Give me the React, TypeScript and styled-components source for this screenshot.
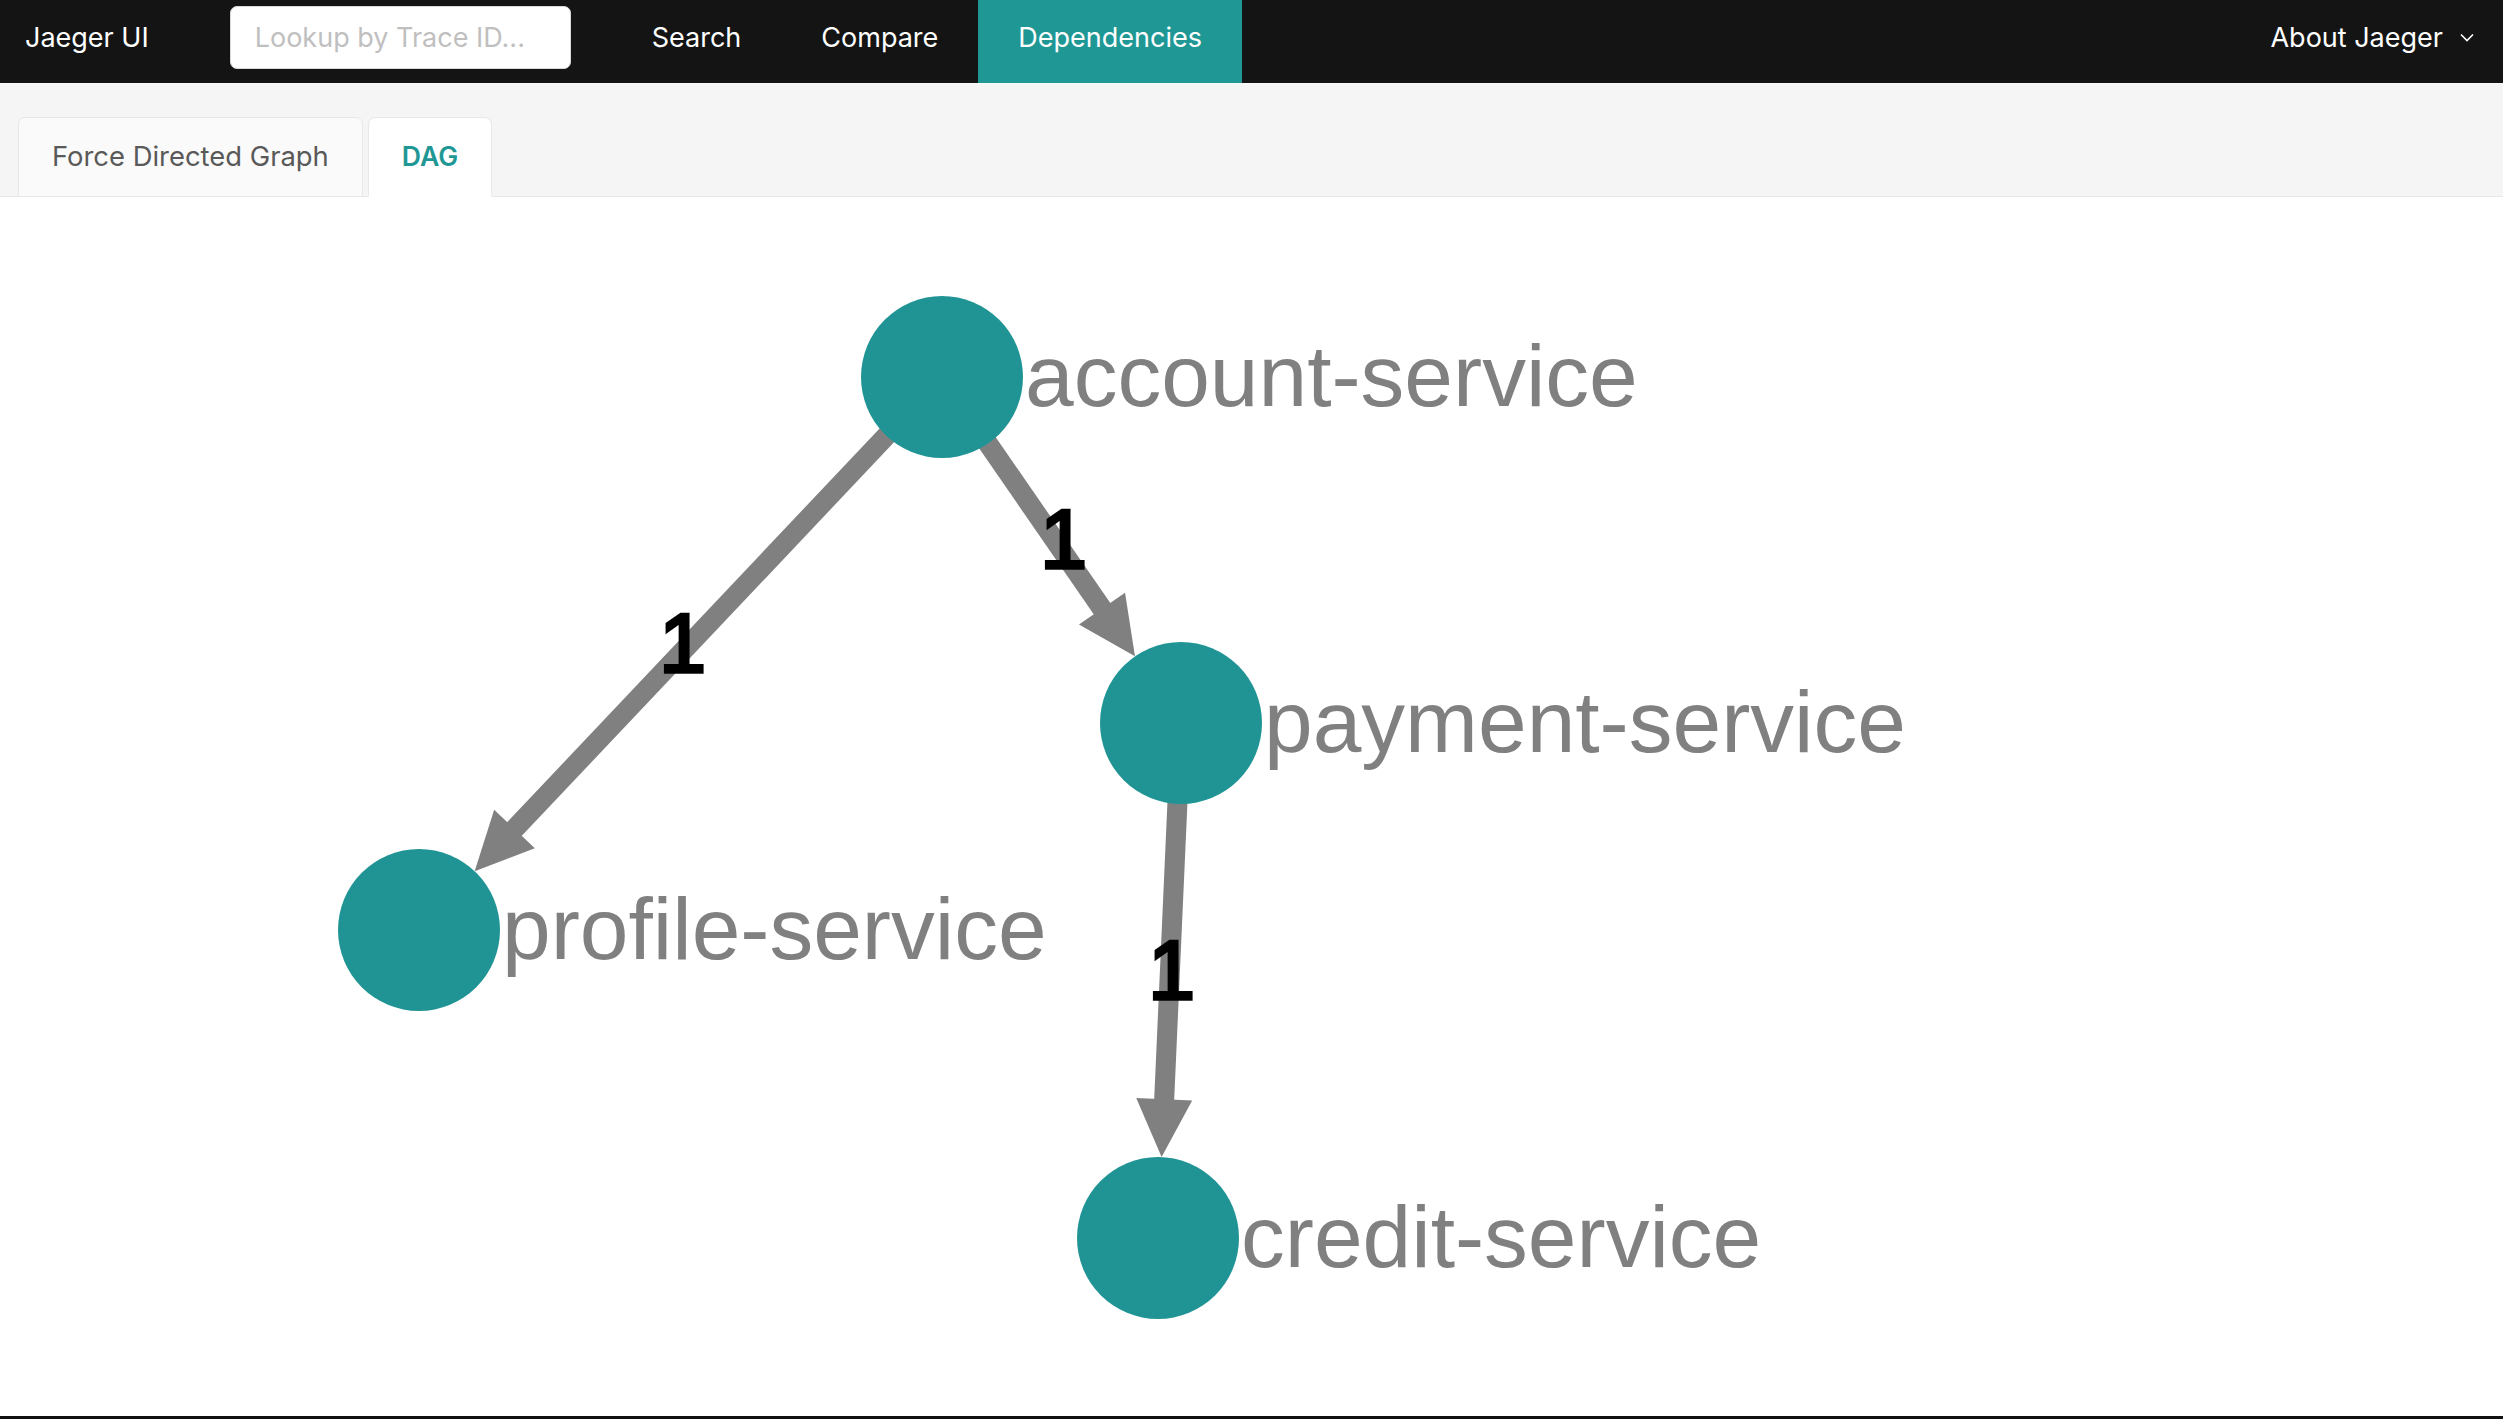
import React from 'react';
import styled, { createGlobalStyle } from 'styled-components';

const TEAL = '#1f9794';
const NODE = '#209494';

const GlobalStyle = createGlobalStyle`
  html, body { margin: 0; padding: 0; background: #fff; }
  body { font-family: Inter, "Noto Sans", sans-serif; -webkit-font-smoothing: antialiased; }
  * { box-sizing: border-box; }
`;

const Page = styled.div`
  display: flex;
  flex-direction: column;
  width: 2503px;
  height: 1419px;
  overflow: hidden;
  border-bottom: 3px solid #111;
`;

const TopNav = styled.header`
  flex: none;
  display: flex;
  align-items: stretch;
  height: 84px;
  background: #141414;
  border-bottom: 1px solid #fafafa;
  color: #fff;
  font-family: Inter, "Noto Sans", sans-serif;
  font-size: 27px;
`;

const Brand = styled.div`
  display: flex;
  align-items: center;
  padding: 0 0 9px 25px;
  white-space: nowrap;
`;

const LookupWrap = styled.div`
  display: flex;
  align-items: center;
  padding-bottom: 9px;
  margin-left: 81px;
`;

const LookupInput = styled.input`
  width: 341px;
  height: 63px;
  border: 1px solid #d9d9d9;
  border-radius: 7px;
  background: #fff;
  padding: 0 24px;
  font-family: Inter, "Noto Sans", sans-serif;
  font-size: 27px;
  color: #333;
  outline: none;
  &::placeholder { color: #bfbfbf; }
`;

const Menu = styled.nav`
  display: flex;
  align-items: stretch;
  margin-left: 41px;
`;

const MenuItem = styled.div<{ $active?: boolean }>`
  display: flex;
  align-items: center;
  padding: 0 40px 9px 40px;
  background: ${p => (p.$active ? TEAL : 'transparent')};
  color: #fff;
  white-space: nowrap;
`;

const About = styled.div`
  margin-left: auto;
  display: flex;
  align-items: center;
  gap: 17px;
  padding: 0 29px 9px 0;
  white-space: nowrap;
`;

const TabBar = styled.div`
  flex: none;
  display: flex;
  align-items: flex-end;
  gap: 5px;
  height: 113px;
  padding: 33px 0 0 18px;
  background: #f5f5f5;
  border-bottom: 1px solid #e8e8e8;
`;

const Tab = styled.div<{ $active?: boolean }>`
  display: flex;
  align-items: center;
  height: 80px;
  margin-bottom: -1px;
  padding: 0 33px 2px 33px;
  border: 1px solid #e8e8e8;
  border-bottom-color: ${p => (p.$active ? '#fff' : '#e8e8e8')};
  border-radius: 7px 7px 0 0;
  background: ${p => (p.$active ? '#fff' : '#fafafa')};
  color: ${p => (p.$active ? TEAL : '#595959')};
  font-family: Inter, "Noto Sans", sans-serif;
  font-size: ${p => (p.$active ? '26.6px' : '27.4px')};
  font-weight: ${p => (p.$active ? 600 : 400)};
  white-space: nowrap;
`;

const GraphArea = styled.main`
  flex: 1;
  background: #fff;
  min-height: 0;
`;

const GraphSvg = styled.svg`
  display: block;
  width: 100%;
  height: 100%;
`;

const NodeLabel = styled.text`
  font-family: "Liberation Sans", Arial, sans-serif;
  font-size: 87.5px;
  fill: #808080;
`;

const EdgeLabel = styled.text`
  font-family: "Liberation Sans", Arial, sans-serif;
  font-size: 84px;
  fill: #000;
  stroke: #000;
  stroke-width: 3.5px;
`;

type Node = { id: string; x: number; y: number };

const R = 81;
const nodes: Node[] = [
  { id: 'account-service', x: 942, y: 377 },
  { id: 'payment-service', x: 1181, y: 723 },
  { id: 'profile-service', x: 419, y: 930 },
  { id: 'credit-service', x: 1158, y: 1238 },
];

const edges: [string, string, string][] = [
  ['account-service', 'profile-service', '1'],
  ['account-service', 'payment-service', '1'],
  ['payment-service', 'credit-service', '1'],
];

const byId = (id: string) => nodes.find(n => n.id === id)!;

const Chevron = () => (
  <svg width="14" height="9" viewBox="0 0 14 9">
    <polyline points="1,1.5 7,7.5 13,1.5" fill="none" stroke="#fff" strokeWidth="1.6" />
  </svg>
);

const Graph = () => {
  const HEAD_LEN = 58;
  const HEAD_HALF = 28;
  const edgeShapes = edges.map(([s, t, label]) => {
    const a = byId(s);
    const b = byId(t);
    const dx = b.x - a.x;
    const dy = b.y - a.y;
    const len = Math.hypot(dx, dy);
    const ux = dx / len;
    const uy = dy / len;
    const tipX = b.x - R * ux;
    const tipY = b.y - R * uy;
    const baseX = tipX - HEAD_LEN * ux;
    const baseY = tipY - HEAD_LEN * uy;
    const nx = -uy;
    const ny = ux;
    const head = `${tipX},${tipY} ${baseX + HEAD_HALF * nx},${baseY + HEAD_HALF * ny} ${baseX - HEAD_HALF * nx},${baseY - HEAD_HALF * ny}`;
    return {
      key: s + t,
      line: { x1: a.x, y1: a.y, x2: baseX + 2 * ux, y2: baseY + 2 * uy },
      head,
      label,
      lx: (a.x + b.x) / 2 + 2,
      ly: (a.y + b.y) / 2 + 18,
    };
  });

  return (
    <GraphSvg viewBox="0 197 2503 1219" preserveAspectRatio="xMinYMin meet">
      {edgeShapes.map(e => (
        <g key={e.key}>
          <line {...e.line} stroke="#808080" strokeWidth={20} />
          <polygon points={e.head} fill="#808080" />
        </g>
      ))}
      {edgeShapes.map(e => (
        <EdgeLabel key={e.key + 'l'} x={e.lx} y={e.ly} textAnchor="middle">
          {e.label}
        </EdgeLabel>
      ))}
      {nodes.map(n => (
        <g key={n.id}>
          <circle cx={n.x} cy={n.y} r={R} fill={NODE} />
          <NodeLabel x={n.x + 83} y={n.y + 29}>
            {n.id}
          </NodeLabel>
        </g>
      ))}
    </GraphSvg>
  );
};

export default function App() {
  return (
    <>
      <GlobalStyle />
      <Page>
        <TopNav>
          <Brand>Jaeger UI</Brand>
          <LookupWrap>
            <LookupInput placeholder="Lookup by Trace ID..." />
          </LookupWrap>
          <Menu>
            <MenuItem>Search</MenuItem>
            <MenuItem>Compare</MenuItem>
            <MenuItem $active>Dependencies</MenuItem>
          </Menu>
          <About>
            About Jaeger
            <Chevron />
          </About>
        </TopNav>
        <TabBar>
          <Tab>Force Directed Graph</Tab>
          <Tab $active>DAG</Tab>
        </TabBar>
        <GraphArea>
          <Graph />
        </GraphArea>
      </Page>
    </>
  );
}
